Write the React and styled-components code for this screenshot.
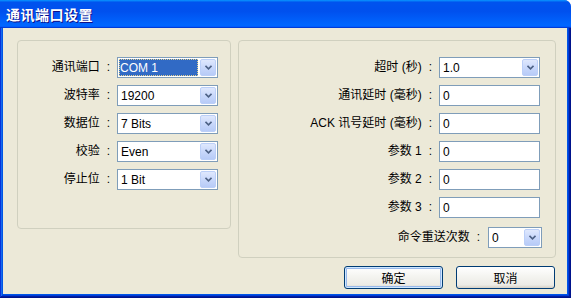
import React from 'react';
import styled, { createGlobalStyle } from 'styled-components';

const GlobalStyle = createGlobalStyle`
  html, body {
    margin: 0;
    padding: 0;
    background: #ffffff;
  }
  body {
    font-family: "Liberation Sans", "Noto Sans CJK SC", sans-serif;
    font-size: 12px;
    color: #000;
  }
`;

const Window = styled.div`
  width: 571px;
  height: 298px;
  display: flex;
  flex-direction: column;
  border-radius: 0 7px 0 0;
  overflow: hidden;
  background: #0055e5;
`;

const TitleBar = styled.div`
  flex: none;
  height: 28px;
  display: flex;
  align-items: center;
  padding-left: 6px;
  background: linear-gradient(
    180deg,
    #0997ff,
    #0053ee 8%,
    #0050ee 40%,
    #0066ff 88%,
    #0066ff 93%,
    #005bff 95%,
    #003dd7 96%,
    #003dd7
  );
  color: #fff;
  font: bold 14px "Noto Sans CJK SC", sans-serif;
  text-shadow: 1px 1px #0f1089;
  letter-spacing: 0.5px;
`;

const Frame = styled.div`
  flex: 1;
  display: flex;
  padding: 0 4px 4px 3px;
  background: #0055e5;
  box-shadow: inset -1px -1px #00138c, inset 1px 0 #0831d9, inset -2px -2px #001ea0,
    inset 2px 0 #166aee, inset -3px -3px #003bda;
`;

const Client = styled.div`
  flex: 1;
  background: #ece9d8;
  display: grid;
  grid-template-columns: 214px 318px;
  column-gap: 7px;
  row-gap: 8px;
  align-content: start;
  align-items: start;
  padding: 12px 0 0 14px;
`;

const Group = styled.div`
  box-sizing: border-box;
  height: ${p => p.$h}px;
  border: 1px solid #d0d0bf;
  border-radius: 4px;
`;

const LeftGroup = styled(Group)`
  display: grid;
  grid-template-columns: 1fr 101px;
  grid-auto-rows: 21px;
  column-gap: 7px;
  row-gap: 7px;
  align-content: start;
  padding: 16px 12px 0 0;
`;

const RightGroup = styled(Group)`
  display: flex;
  flex-direction: column;
  gap: 7px;
  padding: 16px 15px 0 0;
`;

const Row = styled.div`
  display: flex;
  justify-content: flex-end;
  align-items: center;
  height: 21px;
  gap: ${p => p.$gap || 7}px;
  margin-top: ${p => p.$mt || 0}px;
  margin-right: ${p => p.$mr || 0}px;
`;

const Label = styled.div`
  text-align: right;
  line-height: 21px;
  white-space: nowrap;
  font-family: "Liberation Sans", "Noto Sans CJK SC", sans-serif;
  font-size: 12px;
`;

const Colon = styled.span`
  margin-left: 7px;
`;

const Field = styled.div`
  box-sizing: border-box;
  width: ${p => p.$w || 101}px;
  height: 21px;
  border: 1px solid #7f9db9;
  background: #fff;
  padding: 1px;
  display: flex;
  align-items: stretch;
`;

const Value = styled.div`
  flex: 1;
  display: flex;
  align-items: center;
  padding-left: ${p => (p.$selected ? 1 : 2)}px;
  margin-right: 2px;
  font-size: 12px;
  font-family: "Liberation Sans", sans-serif;
  background: ${p => (p.$selected ? '#316ac5' : 'transparent')};
  color: ${p => (p.$selected ? '#fff' : '#000')};
  outline: ${p => (p.$selected ? '1px dotted #e0d090' : 'none')};
  outline-offset: -1px;
`;

const DropButton = styled.div`
  flex: none;
  width: 16px;
  box-sizing: border-box;
  border: 1px solid #bbcff8;
  border-radius: 2px;
  background: linear-gradient(180deg, #dfe8fd 0%, #c9d8fb 50%, #b7cbf7 100%);
  display: flex;
  align-items: center;
  justify-content: center;
`;

const Footer = styled.div`
  grid-column: 2;
  display: flex;
  justify-content: flex-end;
  gap: 13px;
  padding-right: 1px;
`;

const Button = styled.div`
  box-sizing: border-box;
  width: 99px;
  height: 23px;
  border: 1px solid #003c74;
  border-radius: 3px;
  background: linear-gradient(180deg, #ffffff 0%, #f4f4f0 45%, #ecebe6 85%, #d6d0c5 100%);
  display: flex;
  align-items: center;
  justify-content: center;
  font: 12px "Noto Sans CJK SC", sans-serif;
  box-shadow: ${p => (p.$default ? 'inset 0 0 0 1px #cee7ff, inset 0 0 0 2px #98b8ea' : 'none')};
`;

const Chevron = () => (
  <svg width="7" height="5" viewBox="0 0 7 5">
    <polyline points="0.5,0.8 3.5,3.8 6.5,0.8" fill="none" stroke="#4d6185" strokeWidth="1.6" />
  </svg>
);

const Combo = ({ value, width, selected }) => (
  <Field $w={width}>
    <Value $selected={selected}>{value}</Value>
    <DropButton>
      <Chevron />
    </DropButton>
  </Field>
);

const Text = ({ value }) => (
  <Field>
    <Value>{value}</Value>
  </Field>
);

const Caption = ({ children }) => (
  <Label>
    {children}
    <Colon>:</Colon>
  </Label>
);

const leftRows = [
  ['通讯端口', 'COM 1', true],
  ['波特率', '19200'],
  ['数据位', '7 Bits'],
  ['校验', 'Even'],
  ['停止位', '1 Bit'],
];

const rightRows = [
  ['通讯延时 (毫秒)', '0'],
  ['ACK 讯号延时 (毫秒)', '0'],
  ['参数 1', '0'],
  ['参数 2', '0'],
  ['参数 3', '0'],
];

const App = () => (
  <>
    <GlobalStyle />
    <Window>
      <TitleBar>通讯端口设置</TitleBar>
      <Frame>
        <Client>
          <LeftGroup $h={189}>
            {leftRows.map(([label, value, selected]) => (
              <React.Fragment key={label}>
                <Caption>{label}</Caption>
                <Combo value={value} selected={selected} />
              </React.Fragment>
            ))}
          </LeftGroup>
          <RightGroup $h={218}>
            <Row>
              <Caption>超时 (秒)</Caption>
              <Combo value="1.0" />
            </Row>
            {rightRows.map(([label, value]) => (
              <Row key={label}>
                <Caption>{label}</Caption>
                <Text value={value} />
              </Row>
            ))}
            <Row $mt={2} $mr={-2} $gap={8}>
              <Caption>命令重送次数</Caption>
              <Combo value="0" width={54} />
            </Row>
          </RightGroup>
          <Footer>
            <Button $default>确定</Button>
            <Button>取消</Button>
          </Footer>
        </Client>
      </Frame>
    </Window>
  </>
);

export default App;
